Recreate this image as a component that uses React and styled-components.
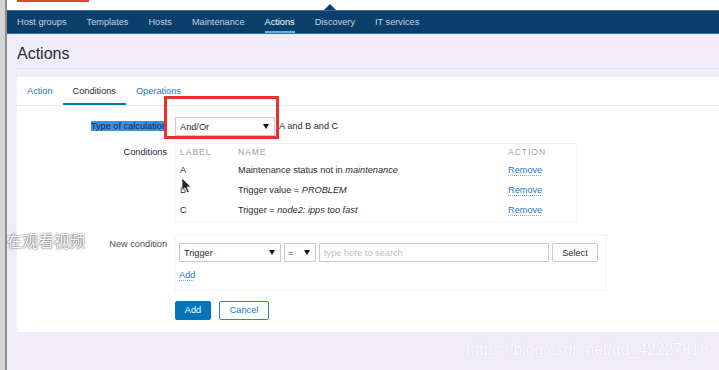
import React from 'react';
import styled, { createGlobalStyle } from 'styled-components';

const GlobalStyle = createGlobalStyle`
  html, body { margin: 0; padding: 0; width: 719px; height: 370px; overflow: hidden; background: #f1ecf9; }
  body { font-family: "Liberation Sans", Arial, sans-serif; font-size: 9.2px; color: #1f2c33; }
  #root { height: 370px; }
  * { box-sizing: border-box; }
`;

const Screen = styled.div`
  display: flex;
  height: 370px;
  position: relative;
  overflow: hidden;
`;

const Gutter = styled.div`
  width: 7px;
  flex: none;
  background: #d5d5d5;
  border-right: 2px solid #8e8e8e;
`;

const Main = styled.div`
  flex: 1;
  min-width: 0;
  display: flex;
  flex-direction: column;
  background: #f1ecf9;
  position: relative;
`;

const TopStrip = styled.div`
  height: 10px;
  background: #fff;
  padding-left: 10px;
  display: flex;
  align-items: flex-start;
`;

const RedMark = styled.div`
  width: 72px;
  height: 2px;
  background: #e8413b;
`;

const Notch = styled.div`
  position: absolute;
  left: 317px;
  top: 4px;
  width: 0;
  height: 0;
  border-left: 6px solid transparent;
  border-right: 6px solid transparent;
  border-bottom: 6px solid #0b3f6b;
`;

const Nav = styled.nav`
  height: 24px;
  background: #0b3f6b;
  border-top: 1px solid #43698d;
  border-bottom: 1px solid #3f6a92;
  display: flex;
`;

const NavItem = styled.div`
  margin: 0 10px;
  line-height: 22px;
  height: 22px;
  font-size: 9.2px;
  color: ${p => (p.$active ? '#ffffff' : '#c6d2de')};
  box-shadow: ${p => (p.$active ? 'inset 0 -2px 0 #69aee6' : 'none')};
  white-space: nowrap;
`;

const Body = styled.div`
  flex: 1;
  padding-left: 10px;
`;

const Title = styled.h1`
  margin: 0;
  height: 35px;
  padding-top: 10px;
  line-height: 20px;
  font-size: 16px;
  font-weight: normal;
  color: #1f2c33;
  border-bottom: 1px solid #e6dff0;
`;

const Panel = styled.div`
  margin-top: 8px;
  background: #fff;
  padding-bottom: 12px;
`;

const Tabs = styled.div`
  display: flex;
  border-bottom: 1px solid #ede7f5;
`;

const Tab = styled.div`
  padding: 0 10px;
  height: 28px;
  line-height: 28px;
  color: ${p => (p.$active ? '#1f2c33' : '#1f74c0')};
  box-shadow: ${p => (p.$active ? 'inset 0 -2px 0 #0275b8' : 'none')};
`;

const Form = styled.div`
  display: flex;
  flex-direction: column;
`;

const FormRow = styled.div`
  display: grid;
  grid-template-columns: 150px auto;
  column-gap: 8px;
  margin-top: ${p => p.$mt}px;
  align-items: start;
`;

const Label = styled.div`
  text-align: right;
  line-height: ${p => p.$lh}px;
  color: ${p => (p.$muted ? '#4a4f55' : '#1f2c33')};
  white-space: nowrap;
`;

const Selected = styled.span`
  background: #3f8fdc;
  color: #0d2a55;
`;

const Field = styled.div`
  display: flex;
  align-items: center;
  gap: ${p => p.$gap || 0}px;
`;

const SelectBox = styled.div`
  width: ${p => p.$w}px;
  height: 19px;
  border: 1px solid #cfc6dc;
  background: #fff;
  display: flex;
  align-items: center;
  justify-content: space-between;
  padding: 0 5px 0 ${p => p.$pl || 4}px;
  color: #1f2c33;
  flex: none;
`;

const Arrow = () => (
  <svg width="6" height="5" viewBox="0 0 6 5"><path d="M0 0 H6 L3 5 Z" fill="#111" /></svg>
);

const Formula = styled.span`
  margin-left: 4px;
  line-height: 19px;
`;

const CondTable = styled.div`
  width: 402px;
  border: 1px solid #f5ecf8;
  padding: 0 4px 2px 4px;
  display: grid;
  grid-template-columns: 58px 270px 64px;
`;

const HeadCell = styled.div`
  line-height: 16px;
  font-size: 8.5px;
  letter-spacing: 1px;
  text-transform: uppercase;
  color: #a39bb3;
`;

const Cell = styled.div`
  line-height: 20px;
  white-space: nowrap;
`;

const LinkText = styled.span`
  color: #2a78c4;
  text-decoration: underline dotted #7aa9da;
  text-underline-offset: 2px;
  cursor: pointer;
`;

const NewCondBox = styled.div`
  border: 1px solid #f5ecf8;
  padding: 7px 8px 7px 3px;
  display: inline-flex;
  flex-direction: column;
  align-items: flex-start;
`;

const SearchInput = styled.input`
  width: 230px;
  height: 19px;
  border: 1px solid #d2c8de;
  padding: 0 4px;
  font: inherit;
  color: #1f2c33;
  outline: none;
  &::placeholder { color: #c4bbd0; }
`;

const GhostButton = styled.button`
  width: 46px;
  height: 19px;
  border: 1px solid #d0c8da;
  border-radius: 2px;
  background: #fff;
  font: inherit;
  color: #1f2c33;
  padding: 0;
`;

const AddLink = styled.div`
  margin-top: 6px;
  line-height: 14px;
`;

const Button = styled.button`
  width: ${p => p.$w}px;
  height: 18.5px;
  padding: 0;
  border-radius: 2px;
  font: inherit;
  border: 1px solid ${p => (p.$primary ? '#0275b8' : '#2d82cc')};
  background: ${p => (p.$primary ? '#0275b8' : '#fff')};
  color: ${p => (p.$primary ? '#fff' : '#1f74c0')};
`;

const RedFrame = styled.div`
  position: absolute;
  left: 164px;
  top: 96px;
  width: 115px;
  height: 43px;
  border: 3px solid #e8312f;
  pointer-events: none;
`;

const Cursor = styled.svg`
  position: absolute;
  left: 181px;
  top: 177px;
`;

const CnMark = styled.div`
  position: absolute;
  left: 7px;
  top: 230px;
  font-family: "Noto Sans CJK SC", sans-serif;
  font-size: 15.6px;
  line-height: 20px;
  color: #fff;
  text-shadow: 0 0 2px rgba(0, 0, 0, 0.7), 0 0 1px rgba(0, 0, 0, 0.4);
  white-space: nowrap;
`;

const UrlMark = styled.div`
  position: absolute;
  left: 466px;
  top: 341px;
  font-size: 15.8px;
  line-height: 18px;
  color: rgba(255, 255, 255, 0.95);
  text-shadow: 0 0 1px rgba(120, 110, 140, 0.25);
  white-space: nowrap;
`;

const navItems = ['Host groups', 'Templates', 'Hosts', 'Maintenance', 'Actions', 'Discovery', 'IT services'];

const conditions = [
  { label: 'A', pre: 'Maintenance status not in ', em: 'maintenance' },
  { label: 'B', pre: 'Trigger value = ', em: 'PROBLEM' },
  { label: 'C', pre: 'Trigger = ', em: 'node2: ipps too fast' },
];

export default function App() {
  return (
    <>
      <GlobalStyle />
      <Screen>
        <Gutter />
        <Main>
          <TopStrip><RedMark /></TopStrip>
          <Notch />
          <Nav>
            {navItems.map(n => (
              <NavItem key={n} $active={n === 'Actions'}>{n}</NavItem>
            ))}
          </Nav>
          <Body>
            <Title>Actions</Title>
            <Panel>
              <Tabs>
                <Tab>Action</Tab>
                <Tab $active>Conditions</Tab>
                <Tab>Operations</Tab>
              </Tabs>
              <Form>
                <FormRow $mt={11}>
                  <Label $lh={19}><Selected>Type of calculation</Selected></Label>
                  <Field>
                    <SelectBox $w={100}><span>And/Or</span><Arrow /></SelectBox>
                    <Formula>A and B and C</Formula>
                  </Field>
                </FormRow>
                <FormRow $mt={7}>
                  <Label $lh={18}>Conditions</Label>
                  <CondTable>
                    <HeadCell>Label</HeadCell>
                    <HeadCell>Name</HeadCell>
                    <HeadCell>Action</HeadCell>
                    {conditions.map(c => (
                      <React.Fragment key={c.label}>
                        <Cell>{c.label}</Cell>
                        <Cell>{c.pre}<i>{c.em}</i></Cell>
                        <Cell><LinkText>Remove</LinkText></Cell>
                      </React.Fragment>
                    ))}
                  </CondTable>
                </FormRow>
                <FormRow $mt={12}>
                  <Label $lh={18} $muted>New condition</Label>
                  <div>
                    <NewCondBox>
                      <Field $gap={3}>
                        <SelectBox $w={102}><span>Trigger</span><Arrow /></SelectBox>
                        <SelectBox $w={32} $pl={3}><span>=</span><Arrow /></SelectBox>
                        <SearchInput placeholder="type here to search" />
                        <GhostButton>Select</GhostButton>
                      </Field>
                      <AddLink><LinkText>Add</LinkText></AddLink>
                    </NewCondBox>
                  </div>
                </FormRow>
                <FormRow $mt={11}>
                  <div />
                  <Field $gap={8}>
                    <Button $primary $w={36}>Add</Button>
                    <Button $w={50}>Cancel</Button>
                  </Field>
                </FormRow>
              </Form>
            </Panel>
          </Body>
        </Main>
        <RedFrame />
        <Cursor width="12" height="17" viewBox="0 0 12 17">
          <path d="M1 1 L1 13.5 L4 10.8 L6.3 15.8 L8.3 14.9 L6.1 10 L10 10 Z" fill="#222" stroke="#fff" strokeWidth="0.8" strokeLinejoin="round" />
        </Cursor>
        <CnMark>在观看视频</CnMark>
        <UrlMark>https://blog.csdn.net/qq_42227818</UrlMark>
      </Screen>
    </>
  );
}
